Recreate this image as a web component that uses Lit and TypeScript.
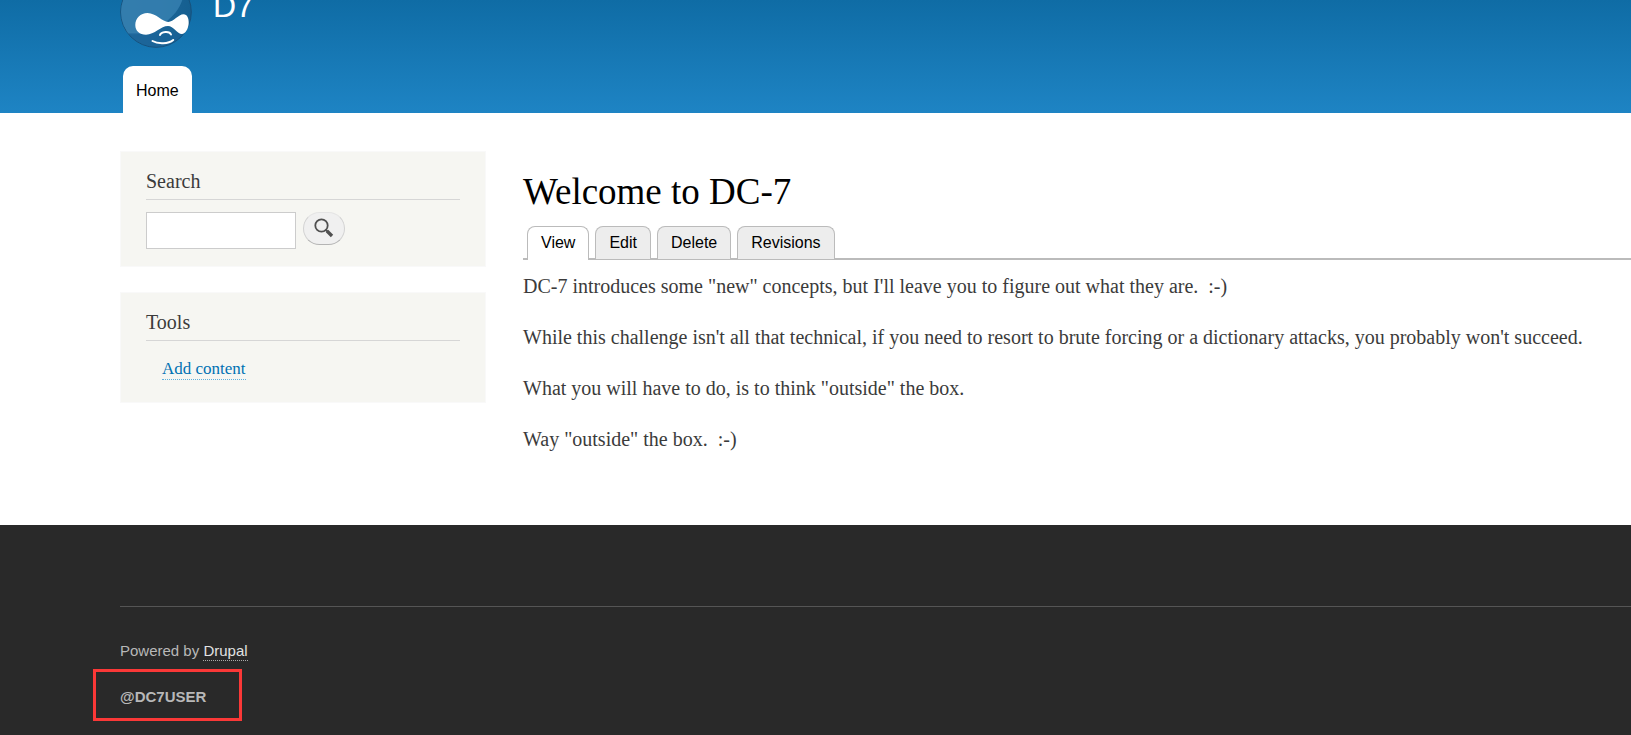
import { LitElement, html, css } from "lit";
import { customElement } from "lit/decorators.js";

const tabs = ["View", "Edit", "Delete", "Revisions"];

const paragraphs = [
  `DC-7 introduces some "new" concepts, but I'll leave you to figure out what they are.\u00a0 :-)`,
  `While this challenge isn't all that technical, if you need to resort to brute forcing or a dictionary attacks, you probably won't succeed.`,
  `What you will have to do, is to think "outside" the box.`,
  `Way "outside" the box.\u00a0 :-)`,
];

@customElement("site-header")
export class SiteHeader extends LitElement {
  static styles = css`
    :host {
      display: block;
      padding-left: 120px;
      font-family: "Liberation Sans", Arial, sans-serif;
      background: linear-gradient(to bottom, #0f6ca5 0%, #1e84c4 100%);
    }
    .branding {
      display: flex;
      align-items: flex-start;
      gap: 21px;
      height: 49px;
    }
    .logo {
      display: block;
      line-height: 0;
    }
    .name {
      color: #fffeff;
      font-size: 32px;
      line-height: 36px;
      margin-top: -12px;
      text-decoration: none;
    }
    .menu {
      display: flex;
      padding: 17px 3px 0;
    }
    .item {
      padding: 2px 13px 0;
      border-radius: 10px 10px 0 0;
      background: #fff;
      color: #000;
      font-size: 16px;
      line-height: 45px;
      text-decoration: none;
    }
  `;

  render() {
    return html`
      <div class="branding">
        <a class="logo" href="#" aria-label="Home">
          <svg width="72" height="49" viewBox="120 0 72 49">
            <defs>
              <linearGradient id="shade" x1="0" y1="0" x2="1" y2="0">
                <stop offset="0" stop-color="#256d9d" />
                <stop offset="0.5" stop-color="#1d6698" />
                <stop offset="1" stop-color="#155f90" />
              </linearGradient>
              <clipPath id="drop"><circle cx="156" cy="12" r="35" /></clipPath>
            </defs>
            <circle cx="156" cy="12" r="35.3" fill="url(#shade)" stroke="#17517c" stroke-width="1" />
            <g clip-path="url(#drop)">
              <path d="M120 -6H184C181 8 174 15 167 21C154 32 137 37 121 33Z" fill="#3680b0" opacity=".85" />
              <path d="M120 33H192V50H120Z" fill="#196299" opacity=".45" />
            </g>
            <path
              d="M135.300 25C135.300 18 140.500 13 147.500 13C156 13 162.500 22 168.300 22C173.500 22 178.500 14.300 183.500 14.300C187.300 14.300 188.900 18.500 188.700 23C188.500 28.500 185.500 34 181.800 34C177.500 34 173.300 26 168 26C161 26 154.500 34.700 146 34.700C139.500 34.700 135.300 31 135.300 25Z"
              fill="#fff"
            />
            <path d="M160 35C161 31.500 169.500 30.500 171 34.500" fill="none" stroke="#fff" stroke-width="2" stroke-linecap="round" />
            <path d="M152.500 41C158 44.300 168.500 44 173.200 40" fill="none" stroke="#fff" stroke-width="2" stroke-linecap="round" />
          </svg>
        </a>
        <a class="name" href="#">D7</a>
      </div>
      <nav class="menu"><a class="item" href="#">Home</a></nav>
    `;
  }
}

@customElement("side-block")
export class SideBlock extends LitElement {
  static properties = { heading: { type: String } };
  declare heading: string;

  static styles = css`
    :host {
      display: block;
      padding: 17px 25px;
      border: 1px solid #f9f9f9;
      box-sizing: border-box;
      background: #f6f6f2;
    }
    .title {
      margin: 0 0 12px;
      padding-bottom: 5px;
      border-bottom: 1px solid #d6d6d6;
      color: #3b3b3b;
      font-size: 20px;
      font-weight: 400;
      line-height: 25px;
    }
  `;

  render() {
    return html`<h2 class="title">${this.heading}</h2><slot></slot>`;
  }
}

@customElement("app-root")
export class AppRoot extends LitElement {
  static styles = css`
    :host {
      display: flex;
      flex-direction: column;
      min-height: 100vh;
      overflow: hidden;
      background: #fff;
      color: #3b3b3b;
      font-family: Georgia, "Liberation Serif", serif;
    }
    .page {
      display: grid;
      grid-template-columns: 366px minmax(0, 1fr);
      gap: 37px;
      padding: 38px 0 72px 120px;
    }
    .side {
      display: flex;
      flex-direction: column;
      gap: 25px;
    }
    .search {
      display: flex;
      align-items: flex-start;
      gap: 7px;
    }
    .query {
      box-sizing: border-box;
      width: 150px;
      height: 37px;
      padding: 4px;
      border: 1px solid #ccc;
      background: #fff;
      font-size: 16px;
    }
    .go {
      display: flex;
      justify-content: center;
      box-sizing: border-box;
      width: 42px;
      height: 33px;
      padding: 5px 0 0;
      border: 1px solid;
      border-color: #e4e4e4 #d2d2d2 #b4b4b4;
      border-radius: 17px;
      background: #f0f0f0;
    }
    .links {
      margin: 0;
      padding: 6px 16px 5px;
      list-style: none;
      font-size: 17px;
      line-height: 20px;
    }
    .link {
      display: inline-block;
      color: #0071b3;
      border-bottom: 1px dotted #5fb0dc;
      text-decoration: none;
    }
    .title {
      margin: 0;
      padding: 19px 0 13px;
      color: #000;
      font-size: 37px;
      font-weight: 400;
      line-height: 43px;
    }
    .tabs {
      display: flex;
      gap: 6px;
      padding-left: 4px;
      border-bottom: 2px solid #bbb;
      font-family: "Liberation Sans", Arial, sans-serif;
    }
    .tab {
      margin-bottom: -1px;
      padding: 0 13px;
      border: 1px solid #bbb;
      border-bottom: 0;
      border-radius: 8px 8px 0 0;
      background: #ededed;
      color: #000;
      font-size: 16px;
      line-height: 32px;
      text-decoration: none;
    }
    .tab.active {
      margin-bottom: -2px;
      padding-bottom: 1px;
      background: #fff;
    }
    .text {
      display: flex;
      flex-direction: column;
      gap: 24px;
      padding-top: 13px;
      font-size: 20px;
      line-height: 27px;
    }
    .para {
      margin: 0;
    }
    .footer {
      flex: 1;
      padding: 81px 0 0 120px;
      background: #292929;
      color: #b8b8b8;
      font-family: "Liberation Sans", Arial, sans-serif;
      font-size: 15px;
      line-height: 20px;
    }
    .credits {
      padding-top: 34px;
      border-top: 1px solid #555;
    }
    .powered {
      margin: 0;
    }
    .drupal {
      display: inline-block;
      line-height: 18px;
      color: #e2e2e2;
      border-bottom: 1px dotted #aaa;
      text-decoration: none;
    }
    .handle {
      display: block;
      box-sizing: border-box;
      width: 149px;
      margin: 8px 0 0 -27px;
      padding: 15px 24px 11px;
      border: 3px solid #fa3837;
      font-weight: 700;
    }
  `;

  render() {
    return html`
      <site-header></site-header>
      <main class="page">
        <aside class="side">
          <side-block heading="Search">
            <form class="search" @submit=${(e: Event) => e.preventDefault()}>
              <input class="query" type="search" aria-label="Search" />
              <button class="go" type="submit" aria-label="Search">
                <svg width="20" height="20" viewBox="0 0 20 20" fill="none" stroke="#505050">
                  <circle cx="7.500" cy="7.500" r="6.200" stroke-width="1.800" />
                  <path d="M11.500 11.500L13.500 13.500" stroke-width="2" />
                  <path d="M13 13L18 18" stroke-width="3.400" />
                </svg>
              </button>
            </form>
          </side-block>
          <side-block heading="Tools">
            <ul class="links">
              <li><a class="link" href="#">Add content</a></li>
            </ul>
          </side-block>
        </aside>
        <article>
          <h1 class="title">Welcome to DC-7</h1>
          <nav class="tabs" aria-label="Tabs">
            ${tabs.map((t, i) => html`<a class="tab ${i === 0 ? "active" : ""}" href="#">${t}</a>`)}
          </nav>
          <div class="text">${paragraphs.map((p) => html`<p class="para">${p}</p>`)}</div>
        </article>
      </main>
      <footer class="footer">
        <div class="credits">
          <p class="powered">Powered by <a class="drupal" href="#">Drupal</a></p>
          <strong class="handle">@DC7USER</strong>
        </div>
      </footer>
    `;
  }
}
